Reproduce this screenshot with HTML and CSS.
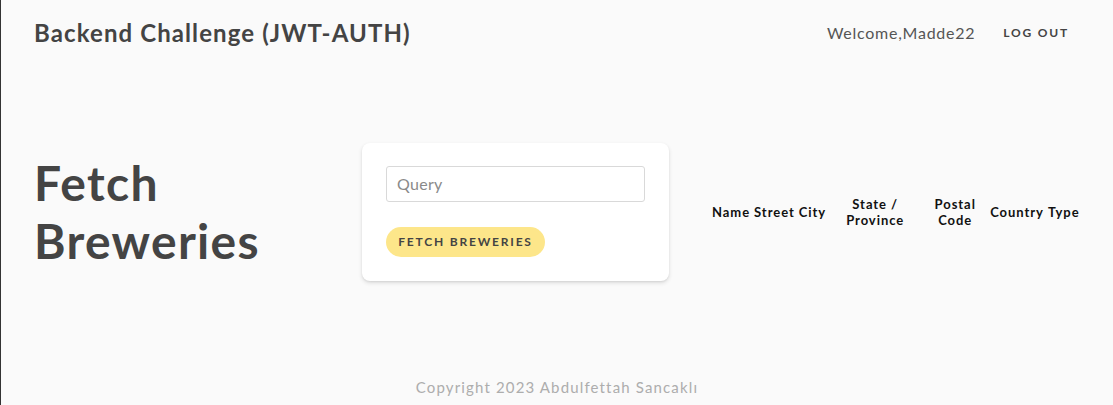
FILE: index.html
```html
<!DOCTYPE html>
<html lang="en">
<head>
<meta charset="utf-8">
<title>Backend Challenge (JWT-AUTH)</title>
<link rel="stylesheet" href="styles.css">
</head>
<body>
<div class="app">
  <header class="topbar">
    <h1 class="brand">Backend Challenge (JWT-AUTH)</h1>
    <div class="user-area">
      <span class="welcome">Welcome,Madde22</span>
      <button class="logout" type="button">Log out</button>
    </div>
  </header>
  <main class="main">
    <h2 class="page-title">Fetch Breweries</h2>
    <section class="card">
      <input class="query" type="text" placeholder="Query">
      <button class="fetch-btn" type="button">Fetch Breweries</button>
    </section>
    <div class="table-wrap">
      <table class="results">
        <thead>
          <tr>
            <th>Name</th>
            <th>Street</th>
            <th>City</th>
            <th class="col-state">State / Province</th>
            <th class="col-postal">Postal Code</th>
            <th>Country</th>
            <th>Type</th>
          </tr>
        </thead>
        <tbody></tbody>
      </table>
    </div>
  </main>
  <footer class="footer">Copyright 2023 Abdulfettah Sancaklı</footer>
</div>
</body>
</html>
```

FILE: styles.css
```css
* { box-sizing: border-box; }

html, body {
  margin: 0;
  padding: 0;
  height: 100%;
}

body {
  background: #fafafa;
  font-family: "Lato", "Noto Sans", sans-serif;
  color: #444;
  border-left: 1px solid #333;
}

.app {
  display: flex;
  flex-direction: column;
  height: 100vh;
}

.topbar {
  height: 64px;
  display: flex;
  align-items: center;
  justify-content: space-between;
  padding: 0 36px 0 33px;
}

.brand {
  margin: 0;
  font-size: 24px;
  font-weight: 700;
  color: #444;
  letter-spacing: 1.1px;
}

.user-area {
  display: flex;
  align-items: center;
  gap: 20px;
}

.welcome {
  font-size: 16px;
  color: #555;
  letter-spacing: 0.75px;
}

.logout {
  border: 0;
  background: transparent;
  font-family: inherit;
  font-size: 12px;
  font-weight: 700;
  letter-spacing: 1.8px;
  text-transform: uppercase;
  color: #444;
  padding: 6px 8px;
}

.main {
  flex: 1;
  display: flex;
  align-items: center;
  padding: 0 0 10px 33px;
}

.page-title {
  margin: 0;
  width: 328px;
  font-size: 48px;
  line-height: 1.2;
  font-weight: 700;
  color: #444;
  letter-spacing: 1.3px;
}

.card {
  width: 307px;
  background: #fff;
  border-radius: 8px;
  box-shadow: 0 2px 4px rgba(0,0,0,0.12), 0 1px 2px rgba(0,0,0,0.06);
  padding: 23px 24px 24px;
  display: flex;
  flex-direction: column;
  align-items: flex-start;
  gap: 25px;
}

.query {
  width: 259px;
  height: 36px;
  border: 1px solid #d9d9d9;
  border-radius: 3px;
  padding: 0 10px;
  font-family: inherit;
  font-size: 16px;
  color: #444;
  background: #fff;
  letter-spacing: 0.3px;
}

.query::placeholder { color: #8a8a8a; }

.fetch-btn {
  height: 30px;
  width: 159px;
  border: 0;
  border-radius: 15px;
  background: #fde68a;
  font-family: inherit;
  font-size: 12px;
  font-weight: 700;
  letter-spacing: 1.8px;
  text-transform: uppercase;
  color: #444;
}

.table-wrap {
  margin-left: 41px;
}

.results {
  border-collapse: collapse;
}

.results th {
  padding: 0 2px;
  font-size: 13px;
  font-weight: 700;
  color: #111;
  text-align: center;
  line-height: 16px;
  letter-spacing: 0.95px;
}

.results th.col-state { width: 94px; }
.results th.col-postal { width: 66px; }

.footer {
  height: 36px;
  display: flex;
  align-items: center;
  justify-content: center;
  font-size: 15px;
  color: #adadad;
  letter-spacing: 1.15px;
}
```
